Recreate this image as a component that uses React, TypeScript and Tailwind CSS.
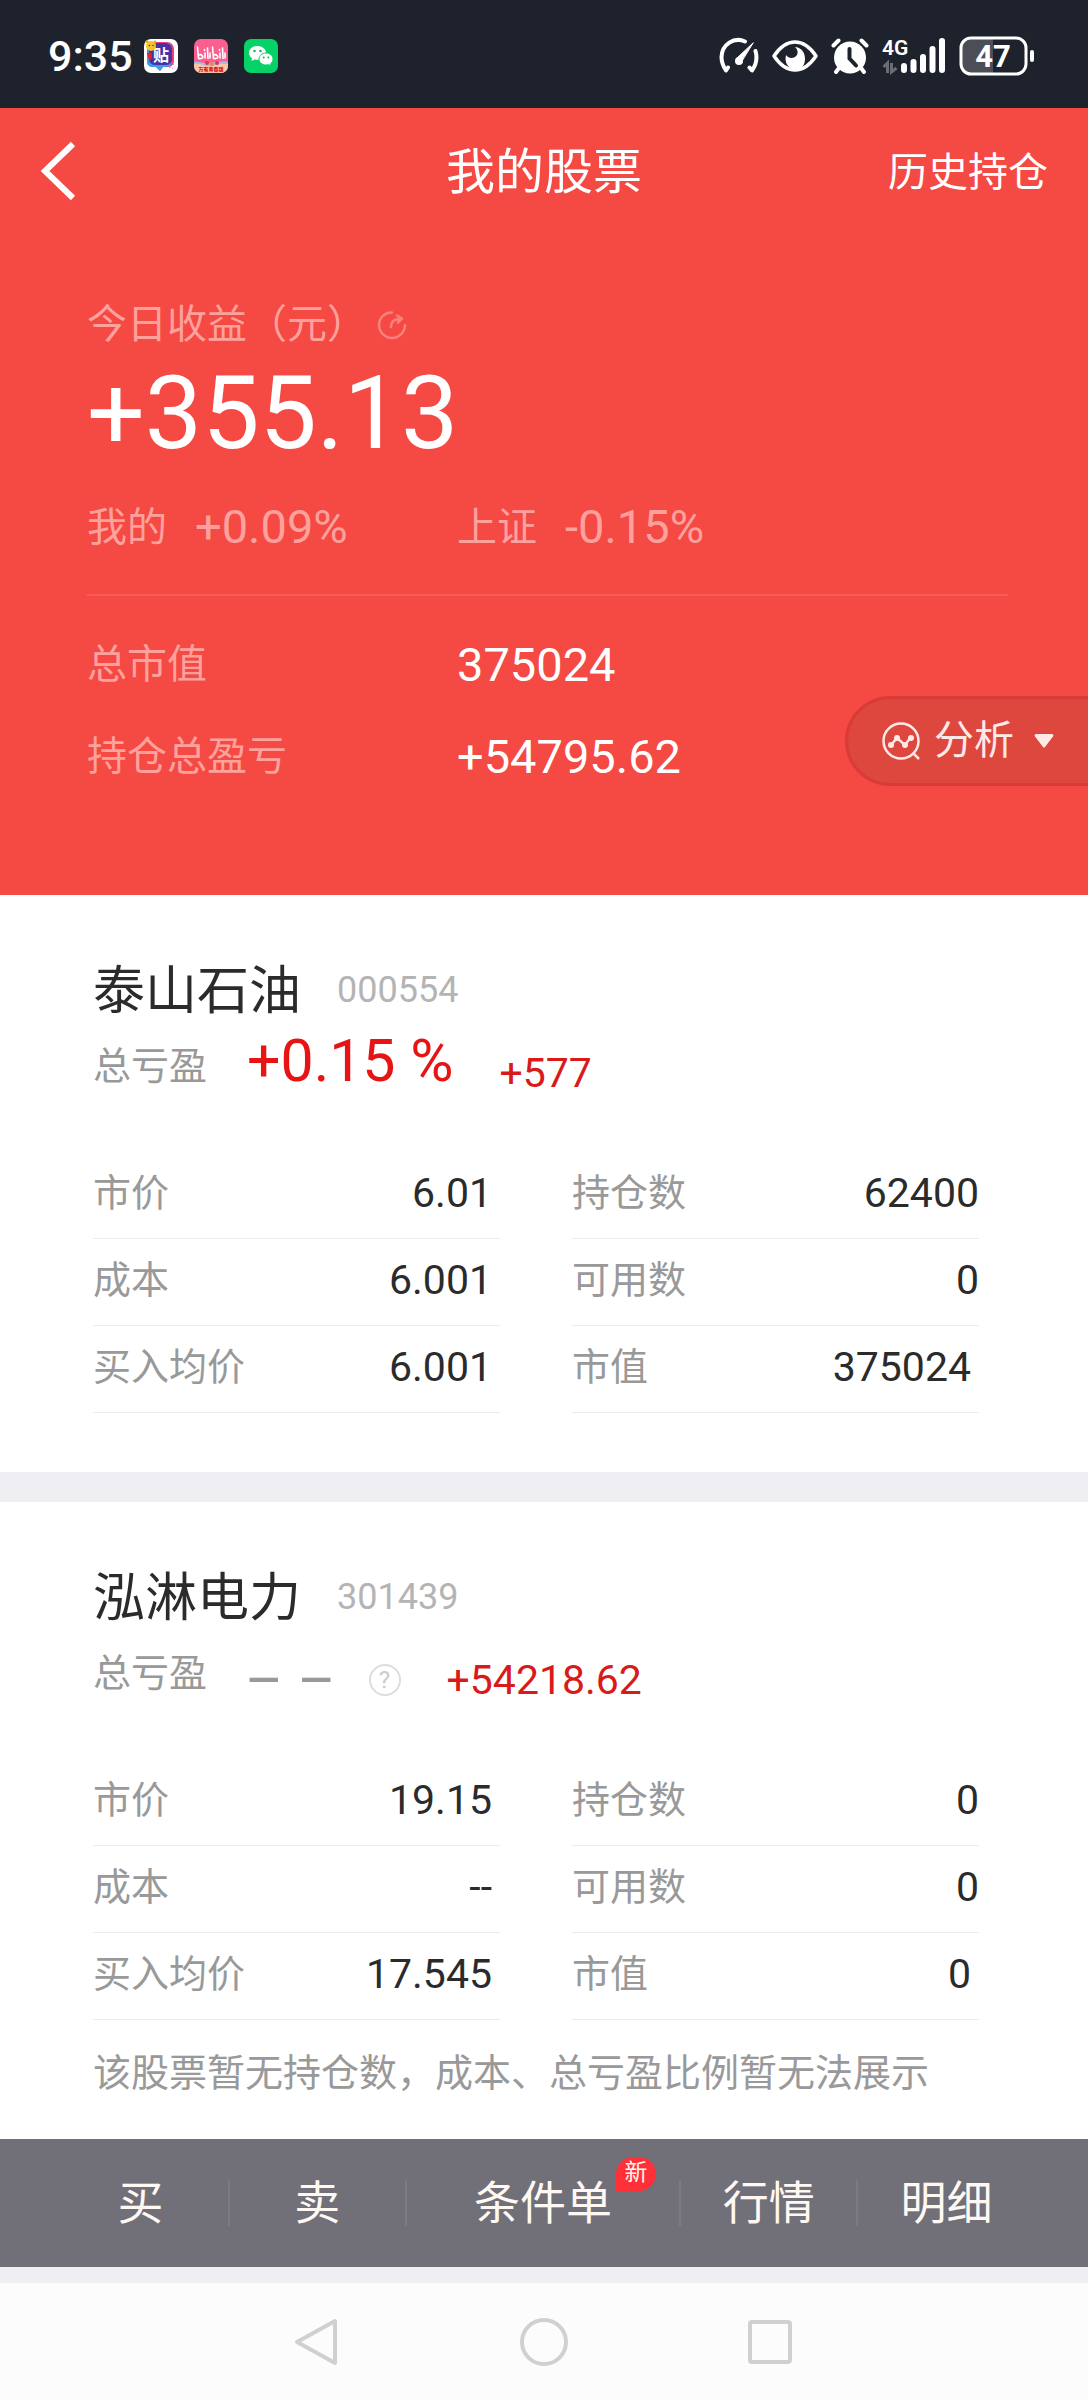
import React from 'react';

type Cell = { label: string; value: string; inset?: boolean };

type Stock = {
  name: string;
  code: string;
  percent?: string;
  profit: string;
  left: Cell[];
  right: Cell[];
  note?: string;
};

const stocks: Stock[] = [
  {
    name: '泰山石油',
    code: '000554',
    percent: '+0.15 %',
    profit: '+577',
    left: [
      { label: '市价', value: '6.01' },
      { label: '成本', value: '6.001' },
      { label: '买入均价', value: '6.001' },
    ],
    right: [
      { label: '持仓数', value: '62400' },
      { label: '可用数', value: '0' },
      { label: '市值', value: '375024', inset: true },
    ],
  },
  {
    name: '泓淋电力',
    code: '301439',
    profit: '+54218.62',
    left: [
      { label: '市价', value: '19.15' },
      { label: '成本', value: '--' },
      { label: '买入均价', value: '17.545' },
    ],
    right: [
      { label: '持仓数', value: '0' },
      { label: '可用数', value: '0' },
      { label: '市值', value: '0', inset: true },
    ],
    note: '该股票暂无持仓数，成本、总亏盈比例暂无法展示',
  },
];

const tabs = [
  { label: '买' },
  { label: '卖' },
  { label: '条件单', badge: '新' },
  { label: '行情' },
  { label: '明细' },
];

function TiebaIcon() {
  return (
    <svg className="size-[34px]" viewBox="0 0 34 34" aria-label="贴吧">
      <rect width="34" height="34" rx="7" fill="#fff" />
      <path d="M9 3h14c4 0 7 3 7 7v12c0 4-3 6-7 6h-4l-3 4-4-4H10c-4 0-7-2-7-6V10c0-4 2-7 6-7z" fill="#e8407c" />
      <path d="M8 5h13c4 0 7 3 7 7v10c0 4-3 6-7 6h-2l-3 4-4-4h-3c-4 0-6-2-6-6V11c0-4 1-6 5-6z" fill="#3b9df0" />
      <path d="M9 4h12c4 0 7 3 7 7v9c0 4-3 6-7 6h-9c-4 0-7-2-7-6v-9c0-4 1-7 4-7z" fill="#4632a0" />
      <text x="17" y="22" fontSize="16" fontWeight="700" textAnchor="middle" fill="#fff">贴</text>
      <circle cx="7" cy="7" r="5" fill="#f5c32e" />
      <circle cx="3" cy="2.500" r="1.500" fill="#e8a720" />
      <circle cx="11" cy="3" r="1.500" fill="#e8a720" />
      <circle cx="5.500" cy="6.500" r="0.800" fill="#6b3a12" />
      <circle cx="9" cy="6.500" r="0.800" fill="#6b3a12" />
      <path d="M3 14l4-1 1 5-2 4-2-3z" fill="#d8263c" />
      <path d="M25 29l2-1M28 30l1-1M29 26l1-1" stroke="#f08ac0" strokeWidth="1" />
    </svg>
  );
}

function BilibiliIcon() {
  return (
    <svg className="size-[34px]" viewBox="0 0 34 34" aria-label="bilibili">
      <defs>
        <clipPath id="bili">
          <rect width="34" height="34" rx="7" />
        </clipPath>
      </defs>
      <g clipPath="url(#bili)">
        <rect width="34" height="34" fill="#fb5f90" />
        <path d="M0 23c6 0 9 3 15 2s12-3 19-2v11H0z" fill="#f9c9a4" />
        <path d="M0 23c6-1 9 2 15 1s12-2 19-1v2c-7-1-13 2-19 2s-9-3-15-2z" fill="#a9b8ea" />
        <circle cx="13" cy="24" r="2" fill="#e5384f" />
        <circle cx="18" cy="25" r="2" fill="#f4863c" />
        <circle cx="23" cy="24" r="2" fill="#e5384f" />
        <g stroke="#fff" strokeWidth="1.600" fill="none" strokeLinecap="round" strokeLinejoin="round">
          <path d="M3.500 8l1 11.500c4 .5 5-1 4-2.500s-3-1.500-4-1M11 14v5M10.500 10.500v1M13.500 9l.5 10.500M16 14v5" />
          <path d="M18.500 8l1 11.500c4 .5 5-1 4-2.500s-3-1.500-4-1M26 14v5M25.500 10.500v1M28.500 9l.5 10.500M31 14v5" />
        </g>
        <text x="17" y="32" fontSize="5" fontWeight="900" textAnchor="middle" fill="#d3122c">万有青春版</text>
      </g>
    </svg>
  );
}

function WechatIcon() {
  return (
    <svg className="size-[34px]" viewBox="0 0 34 34" aria-label="微信">
      <rect width="34" height="34" rx="7" fill="#07d267" />
      <path d="M13.500 7C8.800 7 5 10 5 14c0 2.200 1.200 4 3 5.300L7.500 22l3-1.600c1 .3 2 .4 3 .4 4.700 0 8.500-2.900 8.500-6.800S18.200 7 13.500 7z" fill="#fff" />
      <path d="M22 14c-4 0-7 2.600-7 6s3 6 7 6c.9 0 1.700-.1 2.500-.4L27 27l-.5-2.200c1.600-1.200 2.500-2.800 2.500-4.800 0-3.400-3-6-7-6z" fill="#fff" stroke="#07d267" strokeWidth="1" />
      <circle cx="10.500" cy="12" r="1.300" fill="#07c45f" />
      <circle cx="16.500" cy="12" r="1.300" fill="#07c45f" />
      <circle cx="19.700" cy="18.500" r="1" fill="#07c45f" />
      <circle cx="24.300" cy="18.500" r="1" fill="#07c45f" />
    </svg>
  );
}

function GaugeIcon() {
  return (
    <svg className="h-[38px] w-10" viewBox="0 0 40 38" fill="none" stroke="#fff" strokeLinecap="round">
      <path d="M26 4.500C15 -.5 3 7.500 2.500 20c0 5 1.500 9 4.500 13.500l2-3" strokeWidth="4" strokeLinejoin="round" />
      <path d="M36.500 14c2 7 .5 14-3.500 19.500l-2.500-3" strokeWidth="4" strokeLinejoin="round" />
      <path d="M34 6L18 21l4 4z" fill="#fff" strokeWidth="1" />
      <circle cx="20" cy="24" r="4" fill="#fff" stroke="none" />
    </svg>
  );
}

function EyeIcon() {
  return (
    <svg className="h-[34px] w-[46px]" viewBox="0 0 46 34">
      <path d="M2 17C8 8 15 3 23 3s15 5 21 14c-6 9-13 14-21 14S8 26 2 17z" fill="none" stroke="#fff" strokeWidth="3.500" strokeLinejoin="round" />
      <path d="M23 8c3.500 3 3.500 8 0 10-3 2-7 1-9-2-2 8 2.500 14 9.500 14S33 25.500 33 19.500C33 13 28.500 8 23 8z" fill="#fff" />
    </svg>
  );
}

function AlarmIcon() {
  return (
    <svg className="h-9 w-[38px]" viewBox="0 0 38 36">
      <path d="M2.500 7.500l5-5M35.500 7.500l-5-5" stroke="#fff" strokeWidth="4" strokeLinecap="round" />
      <path d="M8 30l-3 4M30 30l3 4" stroke="#fff" strokeWidth="4" strokeLinecap="round" />
      <circle cx="19" cy="19.500" r="16" fill="#fff" />
      <path d="M18.500 11v9.500l6.500 7" fill="none" stroke="#1e222c" strokeWidth="4" strokeLinecap="round" />
    </svg>
  );
}

function SignalIcon() {
  return (
    <svg className="h-11 w-16" viewBox="0 0 64 44">
      <text x="0" y="21" fontSize="21" fontWeight="600" fill="#fff">4G</text>
      <path d="M5.500 39V29l-4 4M9.500 29v9l5-4" fill="none" stroke="#6a6d75" strokeWidth="3" />
      <path d="M22 32v4M31.500 28v8M41 23v13M50.500 15v21M60 7v29" stroke="#fff" strokeWidth="6" strokeLinecap="round" />
    </svg>
  );
}

function BatteryIcon() {
  return (
    <svg className="h-10 w-[76px]" viewBox="0 0 76 40">
      <path d="M34 3H12a9 9 0 0 0-9 9v16a9 9 0 0 0 9 9h22z" fill="#4b4e57" />
      <rect x="2" y="2" width="65" height="36" rx="10" fill="none" stroke="#fff" strokeWidth="3" />
      <rect x="71" y="14" width="4" height="12" rx="2" fill="#fff" />
      <text x="34" y="31" fontSize="31" fontWeight="700" textAnchor="middle" fill="#fff">47</text>
    </svg>
  );
}

function StatusBar() {
  return (
    <div className="flex h-[108px] items-center justify-between bg-[#1e222c] pt-1 pr-[53px] pl-12 text-white">
      <div className="flex items-center">
        <span className="text-[43px] leading-[48px] font-medium">9:35</span>
        <div className="ml-[11px] flex gap-4">
          <TiebaIcon />
          <BilibiliIcon />
          <WechatIcon />
        </div>
      </div>
      <div className="flex items-center gap-[13px]">
        <GaugeIcon />
        <EyeIcon />
        <AlarmIcon />
        <SignalIcon />
        <BatteryIcon />
      </div>
    </div>
  );
}

function Summary() {
  return (
    <section className="relative bg-[#f54943] pt-[67px] pr-20 pb-[108px] pl-[87px] text-white">
      <div className="flex items-center gap-[10px] text-[40px] leading-[48px] text-[#fda19d]">
        <h2>今日收益（元）</h2>
        <button type="button" aria-label="刷新">
          <svg className="size-[30px]" viewBox="0 0 30 30" fill="none" stroke="#fa807b" strokeWidth="2.500" strokeLinecap="round">
            <path d="M15 2.500C8 2 2 8 2 15s6 13 13 13 13-6 13-13" />
            <path d="M14 17c0-5 3-8 9-8M20 5.500l5 3-4 4" strokeLinejoin="round" />
          </svg>
        </button>
      </div>
      <p className="mt-3 text-[102px] leading-[104px]">+355.13</p>
      <div className="mt-[34px] grid grid-cols-[370px_1fr] border-b-2 border-[#fa5c57] pb-[39px] text-[#fda19d]">
        <p className="flex items-end gap-7">
          <span className="text-[40px] leading-[54px]">我的</span>
          <span className="text-[47px] leading-[56px]">+0.09%</span>
        </p>
        <p className="flex items-end gap-7">
          <span className="text-[40px] leading-[54px]">上证</span>
          <span className="text-[47px] leading-[56px]">-0.15%</span>
        </p>
      </div>
      <dl className="mt-[39px] grid grid-cols-[370px_1fr] gap-y-8">
        <dt className="text-[40px] leading-[60px] text-[#fda19d]">总市值</dt>
        <dd className="text-[47px] leading-[60px]">375024</dd>
        <dt className="text-[40px] leading-[60px] text-[#fda19d]">持仓总盈亏</dt>
        <dd className="text-[47px] leading-[60px]">+54795.62</dd>
      </dl>
      {/* floats over the right edge of the summary */}
      <button
        type="button"
        className="absolute right-0 bottom-[109px] flex h-[90px] items-center rounded-l-full border-y-3 border-l-3 border-[#d93b39] bg-[#dd473e] pr-[34px] pl-[34px] text-[40px] text-[#ffe9e7]"
      >
        <svg className="size-[39px]" viewBox="0 0 39 39" fill="none" stroke="#ffe9e7" strokeWidth="2.500">
          <circle cx="19" cy="19" r="17.500" />
          <path d="M31 31l6 6M9 23l6-7 8 7 6-8" />
          <g fill="#ffe9e7" stroke="none">
            <circle cx="9" cy="23" r="3" />
            <circle cx="15" cy="16" r="3" />
            <circle cx="23" cy="23" r="3" />
            <circle cx="29" cy="16" r="3" />
          </g>
        </svg>
        <span className="ml-[13px]">分析</span>
        <svg className="ml-5 h-[14px] w-5" viewBox="0 0 20 14" fill="#ffe9e7">
          <path d="M2 0h16a1.500 1.500 0 0 1 1 2.500L11 13a1.300 1.300 0 0 1-2 0L1 2.500A1.500 1.500 0 0 1 2 0z" />
        </svg>
      </button>
    </section>
  );
}

function CellList({ cells, padded }: { cells: Cell[]; padded?: boolean }) {
  return (
    <dl>
      {cells.map((cell) => (
        <div key={cell.label} className="flex h-[87px] items-center justify-between border-b border-[#ececec] pb-[3px]">
          <dt className="text-[38px] text-[#999]">{cell.label}</dt>
          <dd className={`text-[41px] text-[#2b2b2b] ${padded ? 'pr-2' : cell.inset ? 'pr-2' : ''}`}>{cell.value}</dd>
        </div>
      ))}
    </dl>
  );
}

function StockCard({ stock }: { stock: Stock }) {
  return (
    <article className={`bg-white pt-[63px] pr-[109px] pl-[93px] ${stock.note ? 'pb-[42px]' : 'pb-[59px]'}`}>
      <div className="flex items-end gap-9">
        <h2 className="text-[52px] leading-[60px] text-[#2b2b2b]">{stock.name}</h2>
        <span className="text-[36px] leading-[64px] text-[#b4b4b4]">{stock.code}</span>
      </div>
      <div className="mt-[14px] flex h-[60px] items-center">
        <span className="text-[38px] text-[#999]">总亏盈</span>
        {stock.percent ? (
          <span className="ml-10 self-start text-[59px] leading-[50px] text-[#e61414]">{stock.percent}</span>
        ) : (
          <div className="ml-[38px] flex items-center gap-[33px] self-end text-[#999]">
            <span className="text-[58px] leading-[46px]">– –</span>
            <button
              type="button"
              aria-label="说明"
              className="size-8 rounded-full border-2 border-[#ddd] text-2xl/[28px] text-[#ccc]"
            >
              ?
            </button>
          </div>
        )}
        <span className="ml-[46px] self-end text-[41px] leading-[46px] text-[#d91a1a]">{stock.profit}</span>
      </div>
      <div className="mt-14 grid grid-cols-2 gap-x-[72px]">
        <CellList cells={stock.left} padded />
        <CellList cells={stock.right} />
      </div>
      {stock.note && <p className="mt-[29px] text-[38px] leading-[48px] text-[#999]">{stock.note}</p>}
    </article>
  );
}

export default function App(): React.JSX.Element {
  return (
    <div lang="zh-CN" className="min-h-screen bg-[#eeeef3] font-['Roboto','Noto_Sans_CJK_SC',sans-serif]">
      <StatusBar />

      <header className="grid h-[126px] grid-cols-[1fr_auto_1fr] items-center bg-[#f54943] pr-10 pl-10 text-white">
        <button type="button" aria-label="返回" className="justify-self-start">
          <svg className="h-[60px] w-9" viewBox="0 0 36 60" fill="none" stroke="#fff" strokeWidth="6">
            <path d="M33 3L5 30l28 27" />
          </svg>
        </button>
        <h1 className="pt-1 text-[49px]">我的股票</h1>
        <a href="#history" className="justify-self-end pt-1 text-[40px]">历史持仓</a>
      </header>

      <main>
        <Summary />
        <div className="flex flex-col gap-[30px]">
          {stocks.map((stock) => (
            <StockCard key={stock.code} stock={stock} />
          ))}
        </div>
      </main>

      <nav className="grid h-32 grid-cols-[9fr_9fr_14fr_9fr_9fr] items-center bg-[#716f78] px-[53px] text-[46px] text-[#fff8f2]">
        {tabs.map((tab) => (
          <button key={tab.label} type="button" className="flex h-[46px] items-center justify-center border-r-2 border-[#7d7b80] last:border-r-0">
            <span className="relative">
              {tab.label}
              {tab.badge && (
                <span className="absolute -top-3 left-full ml-1 flex h-[34px] w-10 items-center justify-center rounded-full rounded-bl-none bg-[#ff3038] text-[23px]">
                  {tab.badge}
                </span>
              )}
            </span>
          </button>
        ))}
      </nav>

      <div className="mt-4 flex h-[117px] items-center justify-center gap-[178px] bg-[#fcfcfc]">
        <button type="button" aria-label="后退">
          <svg className="size-12" viewBox="0 0 48 48" fill="none" stroke="#d0d0d0" strokeWidth="4" strokeLinejoin="round">
            <path d="M41 3v42L3 24z" />
          </svg>
        </button>
        <button type="button" aria-label="主页">
          <svg className="size-12" viewBox="0 0 48 48" fill="none" stroke="#d0d0d0" strokeWidth="4">
            <circle cx="24" cy="24" r="22" />
          </svg>
        </button>
        <button type="button" aria-label="最近任务">
          <svg className="size-12" viewBox="0 0 48 48" fill="none" stroke="#d0d0d0" strokeWidth="4">
            <rect x="4" y="4" width="40" height="40" rx="2" />
          </svg>
        </button>
      </div>
    </div>
  );
}
